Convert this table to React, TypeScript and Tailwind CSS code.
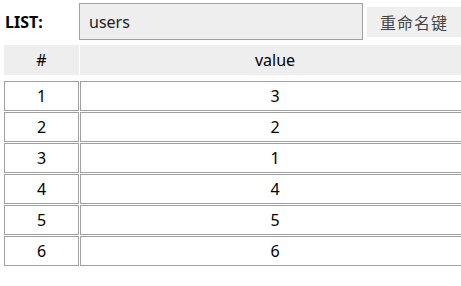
import React from "react";

const rows = [
  ["1", "3"],
  ["2", "2"],
  ["3", "1"],
  ["4", "4"],
  ["5", "5"],
  ["6", "6"],
];

export default function App() {
  return (
    <div
      className="w-[461px] h-[286px] overflow-hidden bg-white text-black text-[16px]"
      style={{ fontFamily: '"Noto Sans", "Noto Sans CJK SC", sans-serif' }}
    >
      <div className="flex items-start pt-[3px]">
        <div className="w-[79px] shrink-0 h-[37px] pl-[5px] flex items-center font-bold text-[16px]">LIST:</div>
        <div className="w-[284px] shrink-0 h-[37px] border border-[#a0a0a0] bg-[#eeeeee] flex items-center pl-[9px] text-[#222]">
          users
        </div>
        <button
          className="ml-[4px] mt-[4px] w-[94px] shrink-0 h-[30px] bg-[#efefef] text-[#444] flex items-center justify-center text-[16px] tracking-[1px]"
          style={{ fontFamily: '"Noto Sans CJK SC", serif' }}
        >
          重命名键
        </button>
      </div>
      <div className="flex gap-[1px] pl-[4px] mt-[5px] w-[480px]">
        <div className="w-[75px] shrink-0 h-[30px] bg-[#eeeeee] flex items-center justify-center">#</div>
        <div className="w-[390px] shrink-0 h-[30px] bg-[#eeeeee] flex items-center justify-center">value</div>
      </div>
      <div className="flex flex-col gap-[1px] pl-[4px] mt-[6px] w-[480px]">
        {rows.map(([k, v]) => (
          <div key={k} className="flex gap-[1px]">
            <div className="w-[75px] shrink-0 h-[30px] border border-[#a0a0a0] flex items-center justify-center">{k}</div>
            <div className="w-[390px] shrink-0 h-[30px] border border-[#a0a0a0] flex items-center justify-center">{v}</div>
          </div>
        ))}
      </div>
    </div>
  );
}
